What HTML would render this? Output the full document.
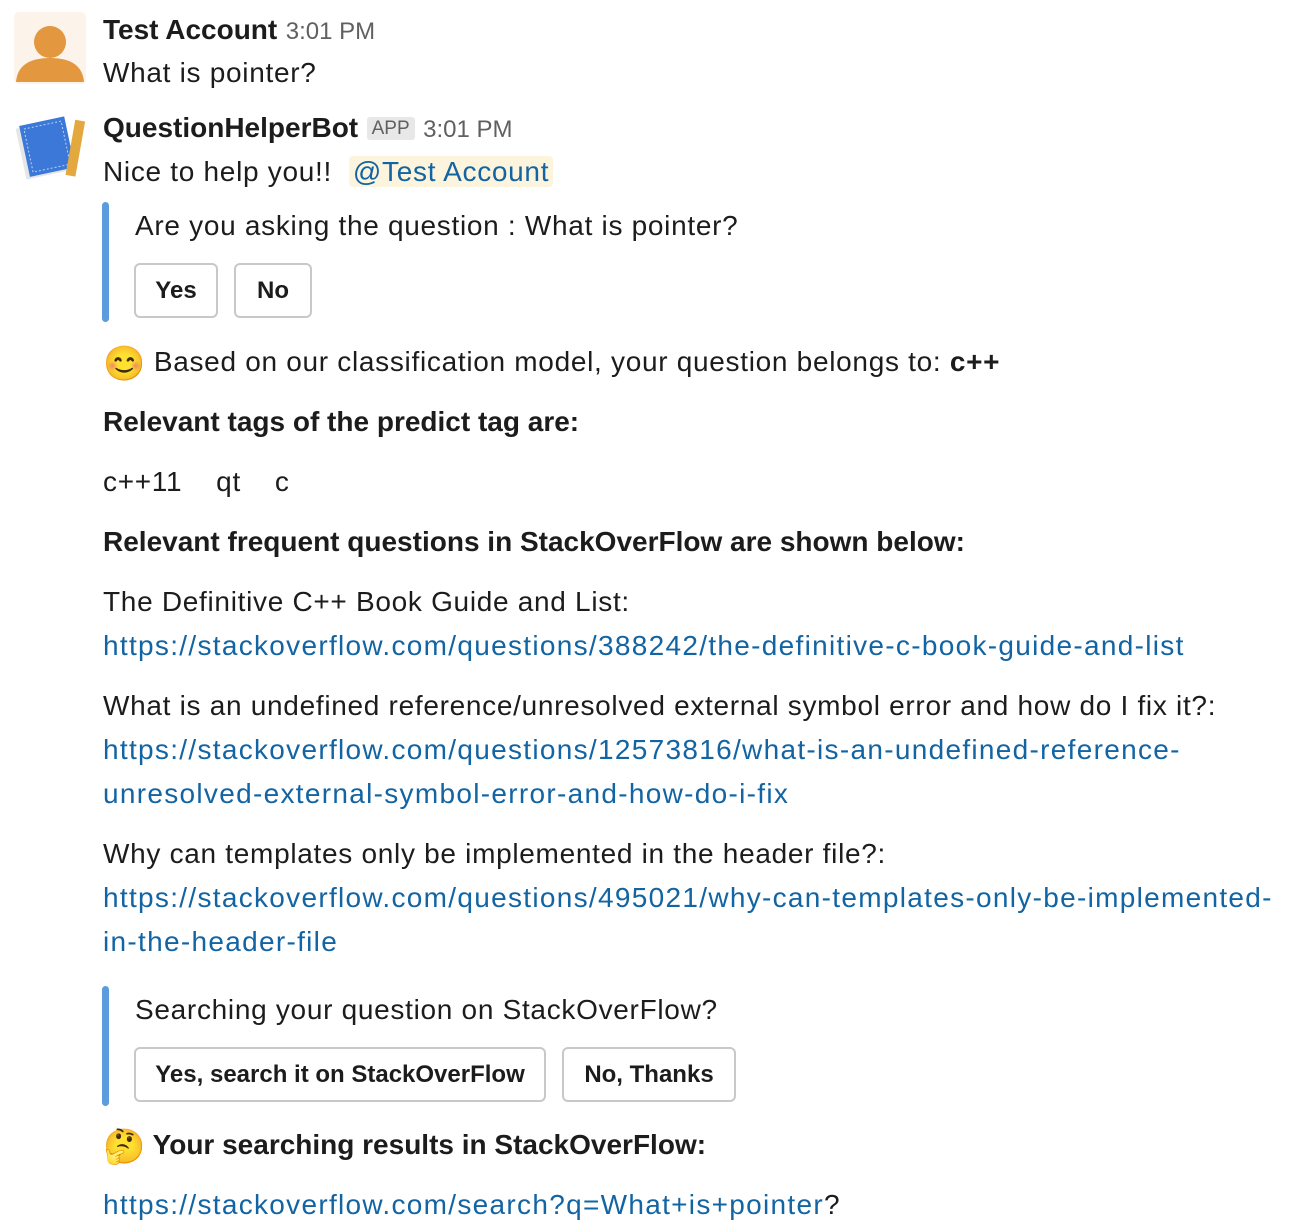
<!DOCTYPE html>
<html><head><meta charset="utf-8"><style>
body{margin:0;width:1302px;height:1232px;background:#fff;position:relative;overflow:hidden;font-family:"Liberation Sans",sans-serif;color:#1d1c1d;}
.l{position:absolute;left:103px;font-size:28px;line-height:34px;white-space:nowrap;letter-spacing:0.7px}
a{color:#1264a3;text-decoration:none;letter-spacing:1.3px}
.b{font-weight:bold;letter-spacing:0}
.btn{position:absolute;border:2px solid #c8c8c8;border-radius:6px;box-sizing:border-box;height:55px;font-size:24px;font-weight:bold;display:flex;align-items:center;justify-content:center;background:#fff}
.bar{position:absolute;left:102px;width:7px;background:#4a90d9;border-radius:4px;opacity:.9}
.ts{font-size:24px;color:#616061;font-weight:normal;letter-spacing:0}
</style></head><body>
<svg style="position:absolute;left:14px;top:12px" width="72" height="72"><rect width="72" height="72" rx="5" fill="#fcf3ea"/><circle cx="36" cy="30" r="16" fill="#e3973f"/><path d="M2 70 Q4 46 36 46 Q68 46 70 70 Z" fill="#e3973f"/></svg>
<div class="l" style="top:13px"><span class="b">Test Account</span> <span class="ts">3:01 PM</span></div>
<div class="l" style="top:56px">What is pointer?</div>
<svg style="position:absolute;left:14px;top:110px" width="72" height="72"><g transform="rotate(-12 36 36)"><rect x="6" y="12" width="48" height="52" fill="#e6e6e6"/><rect x="10" y="10" width="46" height="52" fill="#3b78d8"/><rect x="14" y="14" width="38" height="44" fill="none" stroke="#bcd3f5" stroke-dasharray="2 2"/></g><rect x="56" y="10" width="10" height="56" fill="#e3a93f" transform="rotate(10 60 40)"/></svg>
<div class="l" style="top:111px"><span class="b">QuestionHelperBot</span> <span style="background:#e8e8e8;color:#616061;font-size:19px;padding:1px 5px;border-radius:3px;position:relative;top:-3px;letter-spacing:0">APP</span> <span class="ts">3:01 PM</span></div>
<div class="l" style="top:155px">Nice to help you!! &nbsp;<span style="background:#fcf4dd;color:#1264a3;padding:0 4px;border-radius:4px">@Test Account</span></div>
<div class="bar" style="top:202px;height:120px"></div>
<div class="l" style="left:135px;top:209px">Are you asking the question : What is pointer?</div>
<div class="btn" style="left:134px;top:263px;width:84px">Yes</div>
<div class="btn" style="left:234px;top:263px;width:78px">No</div>
<div class="l" style="top:345px"><span style="font-size:34px;vertical-align:-4px;letter-spacing:0">😊</span> Based on our classification model, your question belongs to: <b>c++</b></div>
<div class="l b" style="top:405px">Relevant tags of the predict tag are:</div>
<div class="l" style="top:465px">c++11 &nbsp;&nbsp; qt &nbsp;&nbsp; c</div>
<div class="l b" style="top:525px">Relevant frequent questions in StackOverFlow are shown below:</div>
<div class="l" style="top:585px">The Definitive C++ Book Guide and List:</div>
<div class="l" style="top:629px"><a>https://stackoverflow.com/questions/388242/the-definitive-c-book-guide-and-list</a></div>
<div class="l" style="top:689px">What is an undefined reference/unresolved external symbol error and how do I fix it?:</div>
<div class="l" style="top:733px"><a>https://stackoverflow.com/questions/12573816/what-is-an-undefined-reference-</a></div>
<div class="l" style="top:777px"><a>unresolved-external-symbol-error-and-how-do-i-fix</a></div>
<div class="l" style="top:837px">Why can templates only be implemented in the header file?:</div>
<div class="l" style="top:881px"><a>https://stackoverflow.com/questions/495021/why-can-templates-only-be-implemented-</a></div>
<div class="l" style="top:925px"><a>in-the-header-file</a></div>
<div class="bar" style="top:986px;height:120px"></div>
<div class="l" style="left:135px;top:993px">Searching your question on StackOverFlow?</div>
<div class="btn" style="left:134px;top:1047px;width:412px">Yes, search it on StackOverFlow</div>
<div class="btn" style="left:562px;top:1047px;width:174px">No, Thanks</div>
<div class="l b" style="top:1128px"><span style="font-size:34px;vertical-align:-4px;font-weight:normal">🤔</span> Your searching results in StackOverFlow:</div>
<div class="l" style="top:1188px"><a>https://stackoverflow.com/search?q=What+is+pointer</a>?</div>
</body></html>
